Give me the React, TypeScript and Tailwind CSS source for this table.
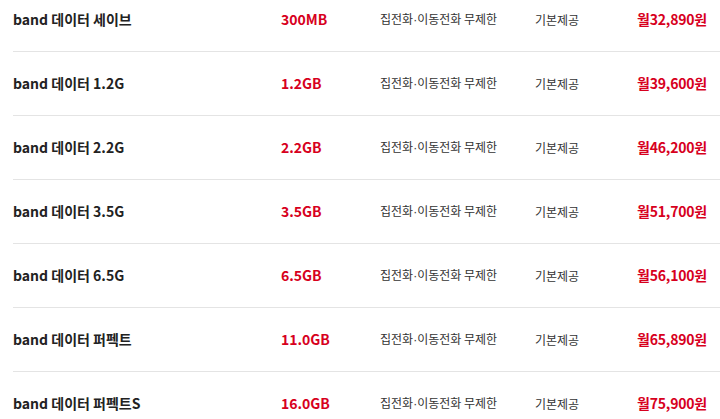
import React from 'react';

const plans = [
  { name: 'band 데이터 세이브', data: '300MB', price: '32,890' },
  { name: 'band 데이터 1.2G', data: '1.2GB', price: '39,600' },
  { name: 'band 데이터 2.2G', data: '2.2GB', price: '46,200' },
  { name: 'band 데이터 3.5G', data: '3.5GB', price: '51,700' },
  { name: 'band 데이터 6.5G', data: '6.5GB', price: '56,100' },
  { name: 'band 데이터 퍼펙트', data: '11.0GB', price: '65,890' },
  { name: 'band 데이터 퍼펙트S', data: '16.0GB', price: '75,900' },
];

const App: React.FC = () => {
  return (
    <div
      className="h-[419px] w-[720px] overflow-hidden bg-white"
      style={{ fontFamily: '"Noto Sans CJK KR", "Noto Sans", sans-serif' }}
    >
      <ul className="-mt-[12px] pl-[13px]">
        {plans.map((p, i) => (
          <li
            key={i}
            className="grid h-[64px] grid-cols-[268px_99px_155px_102px_1fr] items-center border-b border-[#e4e4e4]"
          >
            <span className="text-[14px] font-bold text-[#222]">{p.name}</span>
            <span className="text-[14px] font-bold text-[#d7001d]">{p.data}</span>
            <span className="text-[12px] text-[#333]">
              집전화<span className="font-['Liberation_Sans']">·</span>이동전화 무제한
            </span>
            <span className="text-[12px] text-[#333]">기본제공</span>
            <span className="text-[14px] font-bold tracking-[-0.2px] text-[#d7001d]">월{p.price}원</span>
          </li>
        ))}
      </ul>
    </div>
  );
};

export default App;
